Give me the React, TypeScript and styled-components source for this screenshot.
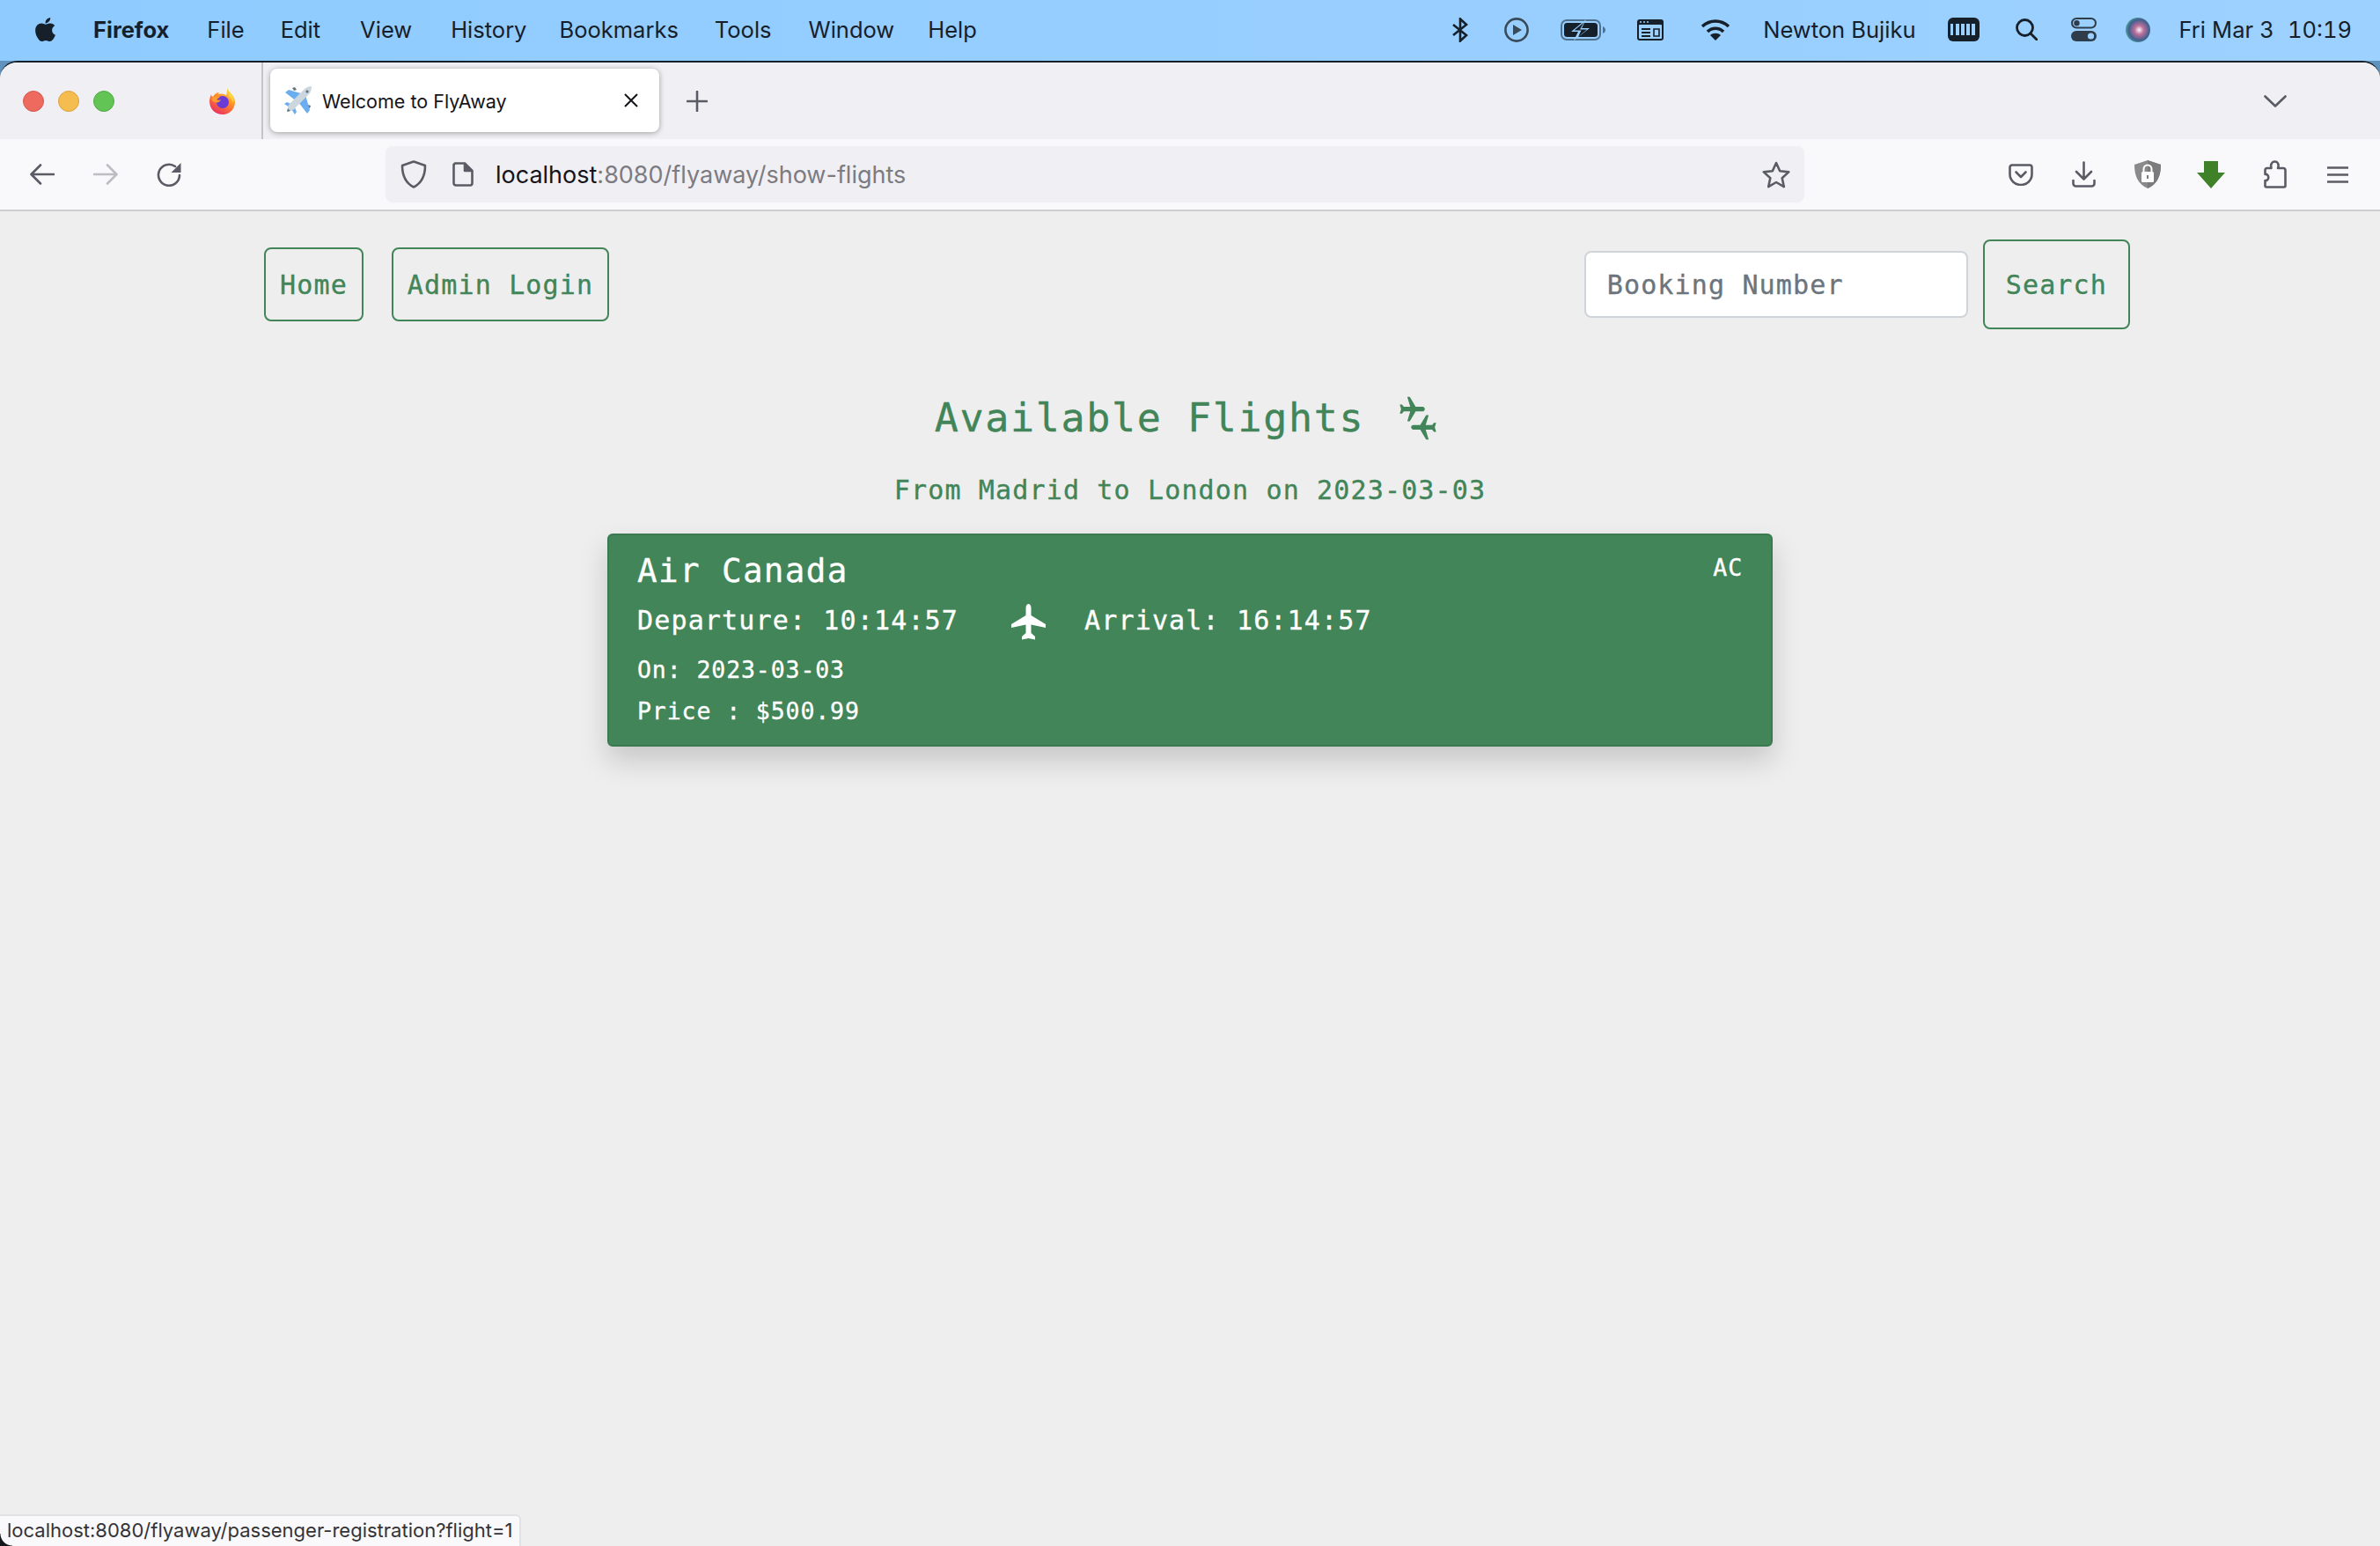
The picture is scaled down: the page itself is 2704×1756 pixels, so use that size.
import React from "react";
import styled, { createGlobalStyle } from "styled-components";
import { FaApple } from "react-icons/fa";
import { MdConnectingAirports } from "react-icons/md";

const GREEN = "#418558";

const GlobalStyle = createGlobalStyle`
  html, body {
    margin: 0;
    padding: 0;
    height: 100%;
    background: #5f93bd;
  }
  * {
    box-sizing: border-box;
  }
`;

const Screen = styled.div`
  position: relative;
  display: flex;
  flex-direction: column;
  width: 2704px;
  height: 1756px;
  overflow: hidden;
  background: #5f93bd;
`;

const MenuBar = styled.div`
  display: flex;
  align-items: center;
  height: 69px;
  padding: 0 32px 2px 36px;
  background: linear-gradient(90deg, #8fcbff, #9dd1ff);
  color: #16202a;
  font-family: Inter, "Liberation Sans", sans-serif;
  font-size: 25.5px;
  white-space: nowrap;
`;

const MenuItem = styled.span<{ $left: number; $bold?: boolean }>`
  margin-left: ${(p) => p.$left}px;
  font-weight: ${(p) => (p.$bold ? 700 : 400)};
  line-height: 30px;
`;

const ClockTime = styled(MenuItem)`
  font-feature-settings: "tnum";
`;

const StatusIcon = styled.svg<{ $left: number }>`
  display: block;
  flex: none;
  margin-left: ${(p) => p.$left}px;
`;

const Spacer = styled.div`
  flex: 1;
`;

const Window = styled.div`
  flex: 1;
  display: flex;
  flex-direction: column;
  border-top: 2px solid #16202a;
  border-radius: 20px 20px 0 0;
  overflow: hidden;
  background: #eeeeee;
`;

const TabStrip = styled.div`
  display: flex;
  align-items: center;
  height: 87px;
  padding: 0 106px 0 26px;
  background: #f0f0f4;
`;

const Dots = styled.div`
  display: flex;
  gap: 16px;
`;

const Dot = styled.span<{ $color: string; $edge: string }>`
  width: 24px;
  height: 24px;
  border-radius: 50%;
  background: ${(p) => p.$color};
  border: 1px solid ${(p) => p.$edge};
`;

const TabDivider = styled.div`
  align-self: stretch;
  width: 2px;
  margin: 0 8px 0 28px;
  background: #c4c4c8;
`;

const Tab = styled.div`
  display: flex;
  align-items: center;
  width: 442px;
  height: 72px;
  margin-bottom: 1px;
  padding: 0 24px 0 16px;
  background: #ffffff;
  border-radius: 8px;
  box-shadow: 0 1px 6px rgba(0, 0, 0, 0.35);
  font-family: Inter, "Liberation Sans", sans-serif;
  font-size: 21.5px;
  color: #15141a;
`;

const TabTitle = styled.span`
  flex: 1;
  margin-left: 11px;
  padding-top: 2px;
`;

const NewTab = styled.svg`
  margin-left: 31px;
`;

const ToolBar = styled.div`
  display: flex;
  align-items: center;
  height: 80px;
  padding: 0 36px 0 34px;
  background: #f9f9fb;
`;

const ToolIcon = styled.svg<{ $left?: number }>`
  display: block;
  flex: none;
  margin-left: ${(p) => p.$left ?? 0}px;
`;

const UrlBar = styled.div`
  display: flex;
  align-items: center;
  width: 1612px;
  height: 64px;
  margin-left: 232px;
  padding: 0 16px 0 17px;
  background: #f0f0f4;
  border-radius: 8px;
  font-family: Inter, "Liberation Sans", sans-serif;
  font-size: 27px;
  color: #15141a;
`;

const UrlText = styled.div`
  flex: 1;
  margin-left: 25px;
  white-space: nowrap;
`;

const UrlDim = styled.span`
  color: #7c7b82;
`;

const Page = styled.div`
  flex: 1;
  background: #eeeeee;
  border-top: 2px solid #cfcfd1;
  font-family: "DejaVu Sans Mono", "Liberation Mono", monospace;
  color: ${GREEN};
  -webkit-text-stroke: 0.35px;
`;

const Nav = styled.nav`
  display: flex;
  align-items: center;
  justify-content: space-between;
  width: 2120px;
  margin: 32px 0 0 300px;
`;

const NavGroup = styled.div<{ $gap: number }>`
  display: flex;
  align-items: center;
  gap: ${(p) => p.$gap}px;
`;

const OutlineButton = styled.button<{ $big?: boolean }>`
  height: ${(p) => (p.$big ? 102 : 84)}px;
  padding: 0 ${(p) => (p.$big ? 24 : 16)}px;
  background: transparent;
  border: 2px solid ${GREEN};
  border-radius: 8px;
  color: ${GREEN};
  font-family: inherit;
  font-size: 30px;
  letter-spacing: 1.15px;
  -webkit-text-stroke: 0.35px;
`;

const BookingInput = styled.input`
  width: 436px;
  height: 76px;
  padding: 0 24px;
  background: #ffffff;
  border: 2px solid #ced4da;
  border-radius: 8px;
  font-family: inherit;
  font-size: 30px;
  letter-spacing: 1.15px;
  -webkit-text-stroke: 0.35px;
  &::placeholder {
    color: #6c757d;
    opacity: 1;
  }
`;

const Heading = styled.h1`
  display: flex;
  align-items: center;
  justify-content: center;
  gap: 30px;
  margin: 65px 0 0;
  font-size: 45px;
  font-weight: 400;
  line-height: 72px;
  letter-spacing: 1.65px;
`;

const SubHeading = styled.h2`
  margin: 22px 0 0;
  text-align: center;
  font-size: 30px;
  font-weight: 400;
  line-height: 48px;
  letter-spacing: 1.15px;
`;

const FlightCard = styled.a`
  display: block;
  position: relative;
  width: 1324px;
  height: 242px;
  margin: 25px 0 0 690px;
  padding: 16px 32px 16px 32px;
  background: ${GREEN};
  border: 2px solid #3b7a50;
  border-radius: 6px;
  box-shadow: 0 16px 32px rgba(0, 0, 0, 0.17);
  color: #ffffff;
`;

const CardTop = styled.div`
  display: flex;
  justify-content: space-between;
`;

const Airline = styled.div`
  font-size: 37.5px;
  line-height: 48px;
  letter-spacing: 1.4px;
`;

const AirlineCode = styled.div`
  font-size: 26.5px;
  line-height: 42px;
  letter-spacing: 0.9px;
`;

const TimeRow = styled.div`
  display: flex;
  align-items: center;
  height: 48px;
  margin-top: 8px;
  font-size: 30px;
  letter-spacing: 1.15px;
`;

const TimeIcon = styled.svg`
  display: block;
  margin: 4px 44px 0 60px;
`;

const CardLine = styled.div<{ $top: number }>`
  margin-top: ${(p) => p.$top}px;
  font-size: 26.5px;
  line-height: 40px;
  letter-spacing: 0.9px;
`;

const StatusLink = styled.div`
  position: absolute;
  left: 0;
  bottom: 0;
  width: 592px;
  height: 36px;
  padding-left: 8px;
  background: #f9f9fb;
  border: 2px solid #e2e2e4;
  border-left: 0;
  border-bottom: 0;
  border-radius: 0 6px 0 0;
  font-family: Inter, "Liberation Sans", sans-serif;
  font-size: 22px;
  line-height: 32px;
  color: #333338;
  white-space: nowrap;

  &::after {
    content: "";
    position: absolute;
    left: 0;
    bottom: 0;
    width: 14px;
    height: 14px;
    background: radial-gradient(circle at 100% 0, transparent 13px, #14181c 14px);
  }
`;

const stroke = { fill: "none", stroke: "#5b5b66", strokeWidth: 2.6, strokeLinecap: "round", strokeLinejoin: "round" } as const;

const FirefoxLogo = () => (
  <ToolIcon $left={107} width="32" height="32" viewBox="0 0 32 32">
    <defs>
      <linearGradient id="fxBody" x1="0.8" y1="0" x2="0.2" y2="1">
        <stop offset="0" stopColor="#ffe24a" />
        <stop offset="0.45" stopColor="#ff8a25" />
        <stop offset="1" stopColor="#e8256b" />
      </linearGradient>
    </defs>
    <path fill="url(#fxBody)" d="M21 1c1 3 4 5 6 8 3 4 4 9 2 13-2 6-8 9-13 9C8 31 1 25 1 16c0-3 1-6 2-8 0 2 1 3 2 3 1-3 4-5 7-5-1 1-1 2 0 2 3-1 6 0 8 1 1-3 1-5 1-8z" />
    <circle cx="16" cy="17" r="7" fill="#6a3bd6" />
    <path fill="#ff9a2b" d="M3 13c3-3 7-3 10-1-2 0-3 1-4 2 2 1 4 1 5 0-1 3-4 4-7 3-2 0-3-2-4-4z" />
    <path fill="#ffd23f" d="M23 5c4 3 6 8 5 13-1-4-3-6-6-8 1-2 1-3 1-5z" />
  </ToolIcon>
);

const PlaneFavicon = () => (
  <svg width="32" height="32" viewBox="0 0 32 32">
    <path fill="#66757f" d="M9 2l3-1 2 3-3 1zM27 21l3 1-1 3-3-1z" />
    <path fill="#6aaef0" d="M1 7l4-3 17 5-8 8zM16 18l8-8 5 17-3 4z" />
    <path fill="#6aaef0" d="M0 20l3-2 7 3-4 3zM8 26l3-4 3 7-2 3z" />
    <path fill="#ccd6dd" d="M31 0c-3 0-6 1-8 3L5 21l-2 8 7-2L28 9c2-2 3-6 3-9z" />
    <path fill="#66757f" d="M3 29l1-4 3 3zM26 4l2 2-2 2-2-2z" />
  </svg>
);

const Siri = () => (
  <StatusIcon $left={33} width="28" height="28" viewBox="0 0 28 28">
    <defs>
      <radialGradient id="siri" cx="0.55" cy="0.5" r="0.6">
        <stop offset="0" stopColor="#f4f8ff" />
        <stop offset="0.3" stopColor="#c0709a" />
        <stop offset="0.7" stopColor="#3f5f8f" />
        <stop offset="1" stopColor="#59b89a" />
      </radialGradient>
    </defs>
    <circle cx="14" cy="14" r="14" fill="url(#siri)" />
  </StatusIcon>
);

export default function App() {
  return (
    <Screen>
      <GlobalStyle />
      <MenuBar>
        <FaApple size={31} style={{ flex: "none" }} />
        <MenuItem $left={39} $bold>Firefox</MenuItem>
        <MenuItem $left={43}>File</MenuItem>
        <MenuItem $left={41}>Edit</MenuItem>
        <MenuItem $left={45}>View</MenuItem>
        <MenuItem $left={44}>History</MenuItem>
        <MenuItem $left={37}>Bookmarks</MenuItem>
        <MenuItem $left={41}>Tools</MenuItem>
        <MenuItem $left={42}>Window</MenuItem>
        <MenuItem $left={38}>Help</MenuItem>
        <Spacer />
        <StatusIcon $left={0} width="18" height="28" viewBox="0 0 18 28" fill="none" stroke="#16202a" strokeWidth="2.6">
          <path d="M1 8l15 12-7 6.5V1.5L16 8 1 20" />
        </StatusIcon>
        <StatusIcon $left={41} width="28" height="28" viewBox="0 0 28 28">
          <circle cx="14" cy="14" r="12.6" fill="none" stroke="#3a4a58" strokeWidth="2.6" />
          <path d="M10 8l10 6-10 6z" fill="#3a4a58" />
        </StatusIcon>
        <StatusIcon $left={36} width="51" height="24" viewBox="0 0 51 24">
          <rect x="1" y="1" width="44" height="22" rx="6" fill="none" stroke="#4f7290" strokeWidth="2" />
          <rect x="4" y="4" width="38" height="16" rx="3.5" fill="#16202a" />
          <path d="M48 8c2 1 3 2 3 4s-1 3-3 4z" fill="#4f7290" />
          <path d="M29 0 12 14h8l-5 10 18-14h-9z" fill="#9bd0ff" />
          <path d="M26.500 3.500 15.500 12.500h8l-3.500 7.500 10-8.500h-8z" fill="#16202a" />
        </StatusIcon>
        <StatusIcon $left={36} width="30" height="24" viewBox="0 0 30 24">
          <rect width="30" height="24" rx="3" fill="#16202a" />
          <rect x="2" y="6" width="26" height="16" rx="1" fill="#9bd0ff" />
          <path d="M5 10h10v2H5zM5 14h10v2H5zM5 18h10v2H5z" fill="#16202a" />
          <path d="M19 11h6v8h-6z" fill="none" stroke="#16202a" strokeWidth="1.6" />
          <circle cx="4" cy="3" r="1" fill="#9bd0ff" />
          <circle cx="8" cy="3" r="1" fill="#9bd0ff" />
          <circle cx="12" cy="3" r="1" fill="#9bd0ff" />
        </StatusIcon>
        <StatusIcon $left={42} width="34" height="25" viewBox="0 0 34 25" fill="none" stroke="#16202a" strokeWidth="3.6">
          <path d="M2 9c9-8 21-8 30 0M8 15c5-5 13-5 18 0" />
          <path d="M17 25l-6-6c3-3 9-3 12 0z" fill="#16202a" stroke="none" />
        </StatusIcon>
        <MenuItem $left={37}>Newton Bujiku</MenuItem>
        <StatusIcon $left={37} width="36" height="27" viewBox="0 0 36 27">
          <rect width="36" height="27" rx="6" fill="#16202a" />
          <path d="M3 7h3v13H3zM9 7h4v13H9zM15 7h4v13h-4zM21 7h4v13h-4zM27 7h4v13h-4z" fill="#9bd0ff" />
        </StatusIcon>
        <StatusIcon $left={41} width="25" height="25" viewBox="0 0 25 25" fill="none" stroke="#16202a" strokeWidth="2.8">
          <circle cx="10.5" cy="10.5" r="9" />
          <path d="M17 17l7 7" strokeLinecap="round" />
        </StatusIcon>
        <StatusIcon $left={38} width="29" height="27" viewBox="0 0 29 27">
          <rect x="1" y="1" width="27" height="10.5" rx="5.2" fill="none" stroke="#2f3d4a" strokeWidth="2" />
          <circle cx="6.5" cy="6.2" r="3.2" fill="#2f3d4a" />
          <rect y="15" width="29" height="12" rx="6" fill="#2f3d4a" />
          <circle cx="22.5" cy="21" r="3.6" fill="#9bd0ff" />
        </StatusIcon>
        <Siri />
        <MenuItem $left={32}>Fri Mar 3</MenuItem>
        <ClockTime $left={16}>10:19</ClockTime>
      </MenuBar>
      <Window>
        <TabStrip>
          <Dots>
            <Dot $color="#ee6a5f" $edge="#d5574c" />
            <Dot $color="#f5bd4f" $edge="#dca23b" />
            <Dot $color="#61c454" $edge="#50a945" />
          </Dots>
          <FirefoxLogo />
          <TabDivider />
          <Tab>
            <PlaneFavicon />
            <TabTitle>Welcome to FlyAway</TabTitle>
            <svg width="16" height="16" viewBox="0 0 16 16" fill="none" stroke="#15141a" strokeWidth="2">
              <path d="M1 1l14 14M15 1 1 15" />
            </svg>
          </Tab>
          <NewTab width="24" height="24" viewBox="0 0 24 24" {...stroke}>
            <path d="M12 1v22M1 12h22" />
          </NewTab>
          <Spacer />
          <svg width="26" height="14" viewBox="0 0 26 14" {...stroke}>
            <path d="M1.5 1.5 13 12.5 24.5 1.5" />
          </svg>
        </TabStrip>
        <ToolBar>
          <ToolIcon width="28" height="24" viewBox="0 0 28 24" {...stroke}>
            <path d="M27 12H2M12 1.5 1.5 12 12 22.5" />
          </ToolIcon>
          <ToolIcon $left={44} width="28" height="24" viewBox="0 0 28 24" {...stroke} stroke="#bdbdc2">
            <path d="M1 12h25M16 1.5 26.5 12 16 22.5" />
          </ToolIcon>
          <ToolIcon $left={44} width="28" height="28" viewBox="0 0 28 28" {...stroke}>
            <path d="M26 15a12 12 0 1 1-5-10" />
            <path d="M27.5 1v11h-11z" fill="#5b5b66" stroke="none" />
          </ToolIcon>
          <UrlBar>
            <svg width="30" height="32" viewBox="0 0 30 32" {...stroke}>
              <path d="M15 1.5 28 6c0 12-4 20-13 24.5C6 26 2 18 2 6z" />
            </svg>
            <ToolIcon $left={29} width="24" height="28" viewBox="0 0 24 28" {...stroke}>
              <path d="M3 1.5h11l8.5 8.5v14a2.5 2.5 0 0 1-2.5 2.500H4a2.500 2.500 0 0 1-2.500-2.500V3z" />
              <path d="M14 2v8h8" fill="#5b5b66" />
            </ToolIcon>
            <UrlText>
              localhost<UrlDim>:8080/flyaway/show-flights</UrlDim>
            </UrlText>
            <svg width="32" height="31" viewBox="0 0 32 31" {...stroke}>
              <path d="M16 2l4.200 9.300 10 1.100-7.500 6.800 2.100 9.900L16 24l-8.800 5.100 2.100-9.900-7.500-6.800 10-1.100z" />
            </svg>
          </UrlBar>
          <ToolIcon $left={232} width="28" height="25" viewBox="0 0 28 25" {...stroke}>
            <path d="M4 1.500h20a2.500 2.500 0 0 1 2.500 2.500v8a12.500 12 0 0 1-25 0V4A2.500 2.500 0 0 1 4 1.500z" />
            <path d="M8.500 9.500 14 15l5.500-5.500" />
          </ToolIcon>
          <ToolIcon $left={44} width="27" height="30" viewBox="0 0 27 30" {...stroke}>
            <path d="M13.500 1.500V20M5 12l8.500 8.500L22 12" />
            <path d="M1.500 22v3.500a3 3 0 0 0 3 3h18a3 3 0 0 0 3-3V22" />
          </ToolIcon>
          <ToolIcon $left={44} width="30" height="32" viewBox="0 0 30 32">
            <path d="M15 0 30 5c0 13-4 22-15 27C4 27 0 18 0 5z" fill="#8a8a8a" />
            <path d="M15 0 30 5c0 13-4 22-15 27z" fill="#7b7b7b" />
            <rect x="8" y="13" width="14" height="12" rx="1.500" fill="#ffffff" />
            <path d="M10.500 13V10a4.500 4.500 0 0 1 9 0v3" fill="none" stroke="#ffffff" strokeWidth="2" />
            <rect x="14" y="17" width="2" height="4" fill="#7b7b7b" />
          </ToolIcon>
          <ToolIcon $left={41} width="32" height="31" viewBox="0 0 32 31">
            <path d="M8 0h16v13h8L16 31 0 13h8z" fill="#3f8128" />
          </ToolIcon>
          <ToolIcon $left={44} width="26" height="32" viewBox="0 0 26 32" {...stroke}>
            <path d="M3 30.500a1.500 1.500 0 0 1-1.500-1.500v-6c5 1 5-8 0-7V11a2 2 0 0 1 2-2h5C7 4 10 1.500 12.500 1.500S18 4 16 9h6a2.500 2.500 0 0 1 2.500 2.500V29a1.500 1.500 0 0 1-1.500 1.500z" />
          </ToolIcon>
          <ToolIcon $left={46} width="24" height="19" viewBox="0 0 24 19" {...stroke}>
            <path d="M0 1.500h24M0 9.500h24M0 17.500h24" />
          </ToolIcon>
        </ToolBar>
        <Page>
          <Nav>
            <NavGroup $gap={32}>
              <OutlineButton>Home</OutlineButton>
              <OutlineButton>Admin Login</OutlineButton>
            </NavGroup>
            <NavGroup $gap={17}>
              <BookingInput placeholder="Booking Number" />
              <OutlineButton $big>Search</OutlineButton>
            </NavGroup>
          </Nav>
          <Heading>
            Available Flights
            <MdConnectingAirports size={62} />
          </Heading>
          <SubHeading>From Madrid to London on 2023-03-03</SubHeading>
          <FlightCard>
            <CardTop>
              <Airline>Air Canada</Airline>
              <AirlineCode>AC</AirlineCode>
            </CardTop>
            <TimeRow>
              Departure: 10:14:57
              <TimeIcon width="39" height="41" viewBox="0 0 39 41">
                <path
                  fill="#ffffff"
                  d="M19.500 0C21.200 0 22.500 2 22.500 4.500V13L39 23v4L22.500 23.500V33l4.500 4v3.500L19.500 39l-7.500 1.500V37l4.500-4V23.500L0 27v-4l16.500-10V4.500C16.500 2 17.800 0 19.500 0z"
                />
              </TimeIcon>
              Arrival: 16:14:57
            </TimeRow>
            <CardLine $top={13}>On: 2023-03-03</CardLine>
            <CardLine $top={7}>Price : $500.99</CardLine>
          </FlightCard>
        </Page>
      </Window>
      <StatusLink>localhost:8080/flyaway/passenger-registration?flight=1</StatusLink>
    </Screen>
  );
}
